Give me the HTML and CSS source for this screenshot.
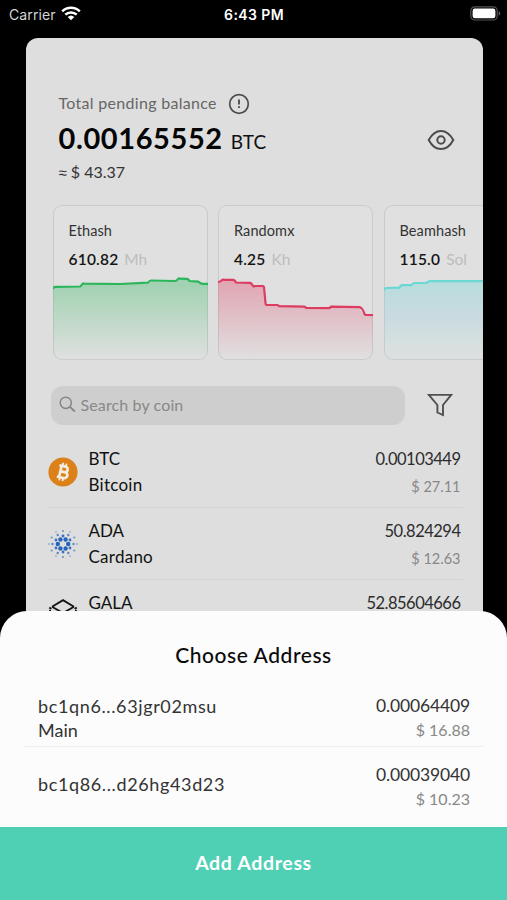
FILE: index.html
```html
<!DOCTYPE html>
<html lang="en">
<head>
<meta charset="utf-8">
<title>Wallet</title>
<link rel="stylesheet" href="styles.css">
</head>
<body>
<div class="screen">
  <header class="status">
    <div class="carrier"><span>Carrier</span>
      <svg width="20" height="15" viewBox="0 0 20 15" fill="none" stroke="#fff" stroke-width="2.5"><path d="M1.2 5.3a12.6 12.6 0 0 1 17.6 0M4.3 8.7a8.2 8.2 0 0 1 11.4 0"/><path d="M10 14.3L6.7 11a4.8 4.8 0 0 1 6.6 0z" fill="#fff" stroke="none"/></svg>
    </div>
    <div class="time">6:43 PM</div>
    <svg class="battery" width="31" height="15" viewBox="0 0 31 15"><rect x=".8" y=".8" width="26.4" height="13.2" rx="4" fill="none" stroke="#555" stroke-width="1.2"/><rect x="2.6" y="2.6" width="22.8" height="9.6" rx="2.3" fill="#fff"/><path d="M28.7 5.2c2 .7 2 3.7 0 4.4z" fill="#666"/></svg>
  </header>

  <main class="panel">
    <section class="balance">
      <div class="label"><span>Total pending balance</span>
        <svg width="22" height="22" viewBox="0 0 22 22" fill="none" stroke="#4c4c4c"><circle cx="11" cy="11" r="9.3" stroke-width="1.7"/><path d="M11 6.6v5M11 13.2v1.7" stroke-width="1.9"/></svg>
      </div>
      <div class="total"><span class="sum">0.00165552</span><span class="unit">BTC</span>
        <svg class="eye" width="28" height="22" viewBox="0 0 28 22" fill="none" stroke="#4c4c4c" stroke-width="2"><path d="M1.7 11C5 4.8 9.300 1.900 14 1.900S23 4.800 26.300 11C23 17.200 18.700 20.100 14 20.100S5 17.200 1.700 11z"/><circle cx="14" cy="11" r="3.700"/></svg>
      </div>
      <div class="fiat"><span class="approx">≈</span> $ 43.37</div>
    </section>

    <section class="cards">
      <article class="card">
        <h2>Ethash</h2>
        <p><b>610.82</b><span>Mh</span></p>
        <svg class="chart" viewBox="0 0 155 155">
          <defs><linearGradient id="g1" x1="0" y1="0" x2="0" y2="1"><stop offset="0" stop-color="#28b658" stop-opacity=".36"/><stop offset="1" stop-color="#28b658" stop-opacity="0"/></linearGradient></defs>
          <path fill="url(#g1)" d="M0 84l2-2h26l3-3h37l28-1 2-2 24 .5 4-2.500h10l3 3h9l3 2h6v76H0z"/>
          <path class="line" stroke="#2bb65b" d="M0 84q.5-2 2-2.200L27 81.500q1-.2 2-2t2-.8l36 .3 28-1.300q1.500-2.200 3-2.200l24 .5q1.500 0 2.500-1.500t2.500-.8l7 .1q1.500.2 2.500 2.200l9 .7q2 2 4 2.200h6"/>
        </svg>
      </article>
      <article class="card">
        <h2>Randomx</h2>
        <p><b>4.25</b><span>Kh</span></p>
        <svg class="chart" viewBox="0 0 155 155">
          <defs><linearGradient id="g2" x1="0" y1="0" x2="0" y2="1"><stop offset="0" stop-color="#e23b60" stop-opacity=".36"/><stop offset="1" stop-color="#e23b60" stop-opacity="0"/></linearGradient></defs>
          <path fill="url(#g2)" d="M0 77l4-2h12l3 3h14l3 3h10l2 19h12l26 2h24l2-1h28l5 8h10v46H0z"/>
          <path class="line" stroke="#dc3c60" d="M0 77q2 0 3.500-1.500t3-.7h9q1.500.2 2.500 2.700l14 .3q1.500.2 2.500 2.300t2 .9h8.500l1 1 1.500 16q0 2 1.500 2h10q1.500.2 2 1.200l25 .4q1.500 0 2 1.200l23 .4q1.500-.2 2-1.500l29 .5q3 1.500 3.700 4.500t2.300 3.300h6q1.500.2 2.500 1"/>
        </svg>
      </article>
      <article class="card">
        <h2>Beamhash</h2>
        <p><b>115.0</b><span>Sol</span></p>
        <svg class="chart" viewBox="0 0 155 155">
          <defs><linearGradient id="g3" x1="0" y1="0" x2="0" y2="1"><stop offset="0" stop-color="#67d8d3" stop-opacity=".34"/><stop offset=".45" stop-color="#8bcbe0" stop-opacity=".28"/><stop offset="1" stop-color="#9fe0d8" stop-opacity=".04"/></linearGradient></defs>
          <path fill="url(#g3)" d="M0 86l2-3h14l2-3h11l2-2h13l3-2h108v79H0z"/>
          <path class="line" stroke="#6bd8d4" d="M0 86q.5-3 2-3l13.500-.3q1-2.500 2.500-2.500h9.500q1.500-2.200 3-2.200l12-.2q2-1.500 3.500-1.700h109"/>
        </svg>
      </article>
    </section>

    <section class="search">
      <div class="field">
        <svg width="17" height="17" viewBox="0 0 17 17" fill="none" stroke="#858585" stroke-width="1.500"><circle cx="6.800" cy="6.800" r="5.600"/><path d="M10.900 10.900l5 4.600" stroke-width="1.800"/></svg>
        <span>Search by coin</span>
      </div>
      <svg class="filter" width="26" height="24" viewBox="0 0 26 24" fill="none" stroke="#505050" stroke-width="1.900"><path d="M1.800 1.900h22.400L16 12v10l-5.600-2.500V12z"/></svg>
    </section>

    <section class="coins">
      <div class="coin">
        <svg class="logo" width="30" height="30" viewBox="0 0 30 30"><circle cx="15" cy="15" r="14.600" fill="#dc8119"/><g fill="none" stroke="#f5ece0" transform="rotate(13 15 15)"><path d="M10 9.200h6.300a2.800 2.800 0 0 1 0 5.600h-4M12.300 14.800h4.700a3 3 0 0 1 0 6H10M12.300 9.200v11.600" stroke-width="2.700"/><path d="M13.200 6v3M16.600 6v3M13.200 21v3M16.600 21v3" stroke-width="1.800"/></g></svg>
        <div class="names"><div>BTC</div><div class="full">Bitcoin</div></div>
        <div class="amounts"><div>0.00103449</div><div class="usd">$ 27.11</div></div>
      </div>
      <div class="coin">
        <svg class="logo" width="30" height="30" viewBox="0 0 30 30" fill="#2564bf">
          <g><circle cx="20.200" cy="15" r="2.200"/><circle cx="17.600" cy="19.500" r="2.200"/><circle cx="12.400" cy="19.500" r="2.200"/><circle cx="9.800" cy="15" r="2.200"/><circle cx="12.400" cy="10.500" r="2.200"/><circle cx="17.600" cy="10.500" r="2.200"/></g>
          <g opacity=".9"><circle cx="22" cy="11" r="1.400"/><circle cx="22" cy="19" r="1.400"/><circle cx="15" cy="23" r="1.400"/><circle cx="8" cy="19" r="1.400"/><circle cx="8" cy="11" r="1.400"/><circle cx="15" cy="7" r="1.400"/></g>
          <g opacity=".7"><circle cx="25.500" cy="15" r="1.200"/><circle cx="20.300" cy="24" r="1.200"/><circle cx="9.700" cy="24" r="1.200"/><circle cx="4.500" cy="15" r="1.200"/><circle cx="9.700" cy="6" r="1.200"/><circle cx="20.300" cy="6" r="1.200"/></g>
          <g opacity=".6"><circle cx="26.300" cy="8.500" r="1.100"/><circle cx="26.300" cy="21.500" r="1.100"/><circle cx="15" cy="28" r="1.100"/><circle cx="3.700" cy="21.500" r="1.100"/><circle cx="3.700" cy="8.500" r="1.100"/><circle cx="15" cy="2" r="1.100"/></g>
          <g opacity=".4"><circle cx="29" cy="15" r=".9"/><circle cx="22" cy="27.200" r=".9"/><circle cx="8" cy="27.200" r=".9"/><circle cx="1" cy="15" r=".9"/><circle cx="8" cy="2.800" r=".9"/><circle cx="22" cy="2.800" r=".9"/></g>
        </svg>
        <div class="names"><div>ADA</div><div class="full">Cardano</div></div>
        <div class="amounts"><div>50.824294</div><div class="usd">$ 12.63</div></div>
      </div>
      <div class="coin">
        <svg class="logo gala" width="30" height="30" viewBox="0 0 30 30" fill="none" stroke="#141414" stroke-width="1.900"><path d="M4 7.700L15 1.200l11 6.500M4 7.700l11 6.300 11-6.300M2 11v10l13 8 13-8V11"/><path d="M1.300 8.500l2 1.500M28.700 8.500l-2 1.500"/></svg>
        <div class="names"><div>GALA</div></div>
        <div class="amounts"><div>52.85604666</div></div>
      </div>
    </section>
  </main>

  <section class="sheet">
    <h1>Choose Address</h1>
    <div class="address first">
      <div class="hash"><div class="key">bc1qn6...63jgr02msu</div><div>Main</div></div>
      <div class="value"><div>0.00064409</div><div class="usd">$ 16.88</div></div>
    </div>
    <div class="address">
      <div class="hash single"><div class="key">bc1q86...d26hg43d23</div></div>
      <div class="value"><div>0.00039040</div><div class="usd">$ 10.23</div></div>
    </div>
    <button class="add">Add Address</button>
  </section>
</div>
</body>
</html>
```
FILE: styles.css
```css
* { box-sizing: border-box; }
body { margin: 0; background: #000; font-family: Lato, "Liberation Sans", sans-serif; color: #111; }
h1, h2, p { margin: 0; font-weight: 400; }
svg { display: block; flex: none; }
.screen { position: relative; width: 507px; height: 900px; overflow: hidden; background: #000; white-space: nowrap; }

.status { display: grid; grid-template-columns: 1fr auto 1fr; align-items: center; height: 28px; padding: 0 6px 0 9px; color: #fff; font-family: Inter, sans-serif; font-size: 14px; }
.carrier { display: flex; align-items: center; gap: 5px; color: #d4d4d4; letter-spacing: .1px; }
.carrier svg { margin-top: -2px; }
.time { margin-left: -2px; font-weight: 600; font-size: 14px; letter-spacing: .4px; }
.battery { justify-self: end; margin-top: -2px; }

.panel { margin: 10px 0 0 25.5px; width: 457px; height: 700px; padding-top: 53px; background: #dedede; border-radius: 12px 12px 0 0; overflow: hidden; }
.balance { padding: 0 28px 0 33px; }
.label { display: flex; align-items: center; gap: 11px; height: 24px; line-height: 24px; font-size: 16px; letter-spacing: .3px; color: #666; }
.label svg { margin-top: 2px; }
.total { display: flex; align-items: baseline; height: 40px; margin-top: 3px; line-height: 40px; }
.sum { font-size: 29px; font-weight: 700; letter-spacing: .6px; color: #050505; }
.unit { margin-left: 8px; font-size: 19px; }
.eye { margin-left: auto; align-self: center; margin-top: 3px; }
.fiat { height: 24px; margin-top: 2px; line-height: 24px; font-size: 16px; color: #333; }
.approx { font-size: 15px; font-family: "Liberation Sans", sans-serif; }

.cards { display: flex; gap: 10.5px; margin: 21px 0 0 27px; }
.card { position: relative; flex: none; width: 155px; height: 155px; padding: 14px 0 0 16px; border-radius: 9px; background: #e0e0e0; box-shadow: inset 0 0 0 1px #cbcbcb; overflow: hidden; }
.card h2 { font-size: 14.500px; line-height: 24px; letter-spacing: .1px; color: #333; }
.card p { display: flex; gap: 6px; margin-top: 4px; font-size: 15.500px; line-height: 24px; color: #bdbdbd; }
.card b { color: #151515; font-weight: 600; letter-spacing: .2px; }
.chart { position: absolute; inset: 0; width: 155px; height: 155px; }
.line { fill: none; stroke-width: 2.200; stroke-linejoin: round; }

.search { display: flex; align-items: center; margin: 25.500px 0 0 25px; }
.field { display: flex; align-items: center; gap: 5px; width: 354.500px; height: 39.500px; padding: 0 0 1px 8px; border-radius: 12px; background: #cecece; font-size: 16px; letter-spacing: .12px; color: #888; }
.filter { margin-left: 22px; }

.coins { margin: 11px 20px 0 22px; }
.coin { display: flex; height: 72px; padding-top: 10px; border-bottom: 1px solid #d3d3d3; line-height: 25.500px; font-size: 17px; }
.logo { margin-top: 10.500px; }
.gala { margin-top: 9px; }
.names { margin-left: 11px; }
.full { letter-spacing: .25px; }
.amounts { margin-left: auto; text-align: right; font-size: 16.500px; letter-spacing: -.5px; color: #2c2c2c; padding: 1px 2px 0 0; }
.amounts .usd { margin-top: 1px; font-size: 14.500px; letter-spacing: 0; color: #888; }

.sheet { position: absolute; left: 0; right: 0; top: 610.500px; height: 289.500px; display: flex; flex-direction: column; background: #fcfcfc; border-radius: 27px 27px 0 0; overflow: hidden; }
h1 { margin-top: 27px; text-align: center; font-size: 21px; font-weight: 500; line-height: 33px; letter-spacing: .55px; color: #0a0a0a; }
.address { display: flex; justify-content: space-between; align-items: center; margin: 0 24px; padding: 0 13px 0 14px; height: 80px; font-size: 18px; line-height: 24.500px; color: #333; }
.address.first { height: 77px; padding-top: 20px; border-bottom: 1px solid #efefef; }
.key { letter-spacing: .63px; }
.single { padding-bottom: 6px; }
.value { text-align: right; font-size: 17.500px; letter-spacing: -.15px; }
.value .usd { font-size: 16px; letter-spacing: 0; color: #888; }
.add { margin-top: auto; height: 73px; padding-bottom: 4px; border: 0; background: #4fd0b5; color: #fff; font: 700 19.500px Lato, sans-serif; letter-spacing: .65px; }
```
